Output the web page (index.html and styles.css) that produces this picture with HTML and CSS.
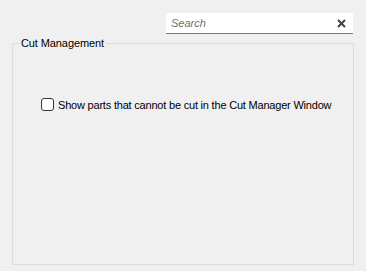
FILE: index.html
```html
<!DOCTYPE html>
<html lang="en">
<head>
    <meta charset="UTF-8">
    <title>Cut Management</title>
    <link rel="stylesheet" href="styles.css">
</head>
<body>
    <div class="toolbar">
        <div class="search-box">
            <input type="text" class="search-input" placeholder="Search">
            <span class="search-clear">
                <svg width="9" height="9" viewBox="0 0 9 9">
                    <path d="M1 1 L8 8 M8 1 L1 8" stroke="#444" stroke-width="2"/>
                </svg>
            </span>
        </div>
    </div>

    <fieldset class="group">
        <legend>Cut Management</legend>
        <label class="check-row">
            <span class="checkbox"></span>
            <span>Show parts that cannot be cut in the Cut Manager Window</span>
        </label>
    </fieldset>
</body>
</html>
```

FILE: styles.css
```css
* {
    margin: 0;
    padding: 0;
    box-sizing: border-box;
}

body {
    background: #f0f0f0;
    font-family: "Liberation Sans", Arial, sans-serif;
    font-size: 11px;
    color: #000;
    width: 366px;
    height: 271px;
    overflow: hidden;
}

.toolbar {
    display: flex;
    justify-content: flex-end;
    padding: 13px 13px 0 0;
}

.search-box {
    width: 187px;
    height: 21px;
    background: #fff;
    border-bottom: 1px solid #7a7a7a;
    display: flex;
    align-items: center;
    padding: 0 7px 0 5px;
}

.search-input {
    flex: 1;
    min-width: 0;
    border: none;
    outline: none;
    background: transparent;
    font-family: inherit;
    font-size: 11px;
    font-style: italic;
    color: #555;
}

.search-input::placeholder {
    color: #707070;
}

.search-clear {
    display: flex;
}

.group {
    margin: 3px 12px 0 12px;
    height: 228px;
    border: 1px solid #dcdcdc;
    padding: 0;
}

.group legend {
    margin-left: 6px;
    padding: 0 2px;
    font-size: 11px;
    letter-spacing: -0.1px;
}

.check-row {
    display: flex;
    align-items: center;
    gap: 4px;
    margin: 49px 0 0 28px;
    white-space: nowrap;
    letter-spacing: -0.2px;
}

.checkbox {
    flex: none;
    width: 13px;
    height: 13px;
    border: 1px solid #333;
    border-radius: 3px;
    background: #fff;
}
```
